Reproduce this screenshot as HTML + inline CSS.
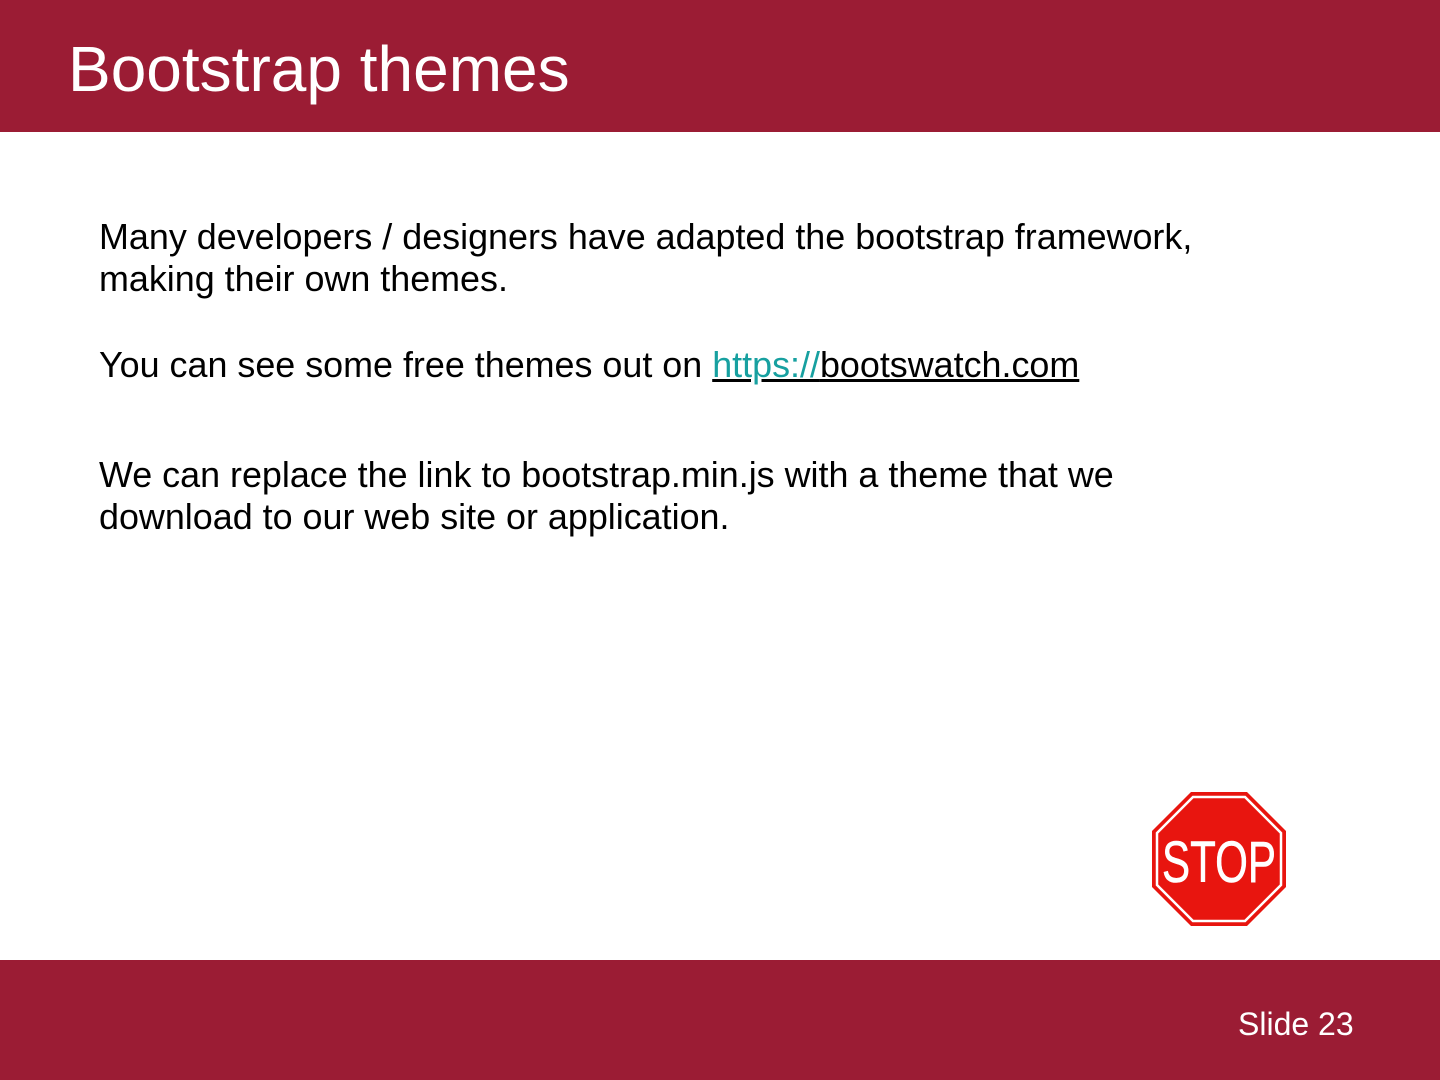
<!DOCTYPE html>
<html><head><style>
body{margin:0;width:1440px;height:1080px;position:relative;background:#fff;font-family:"Liberation Sans",sans-serif;overflow:hidden}
.hd{position:absolute;left:0;top:0;width:1440px;height:132px;background:#9b1c34}
.hd h1{position:absolute;left:68px;top:34px;margin:0;font-weight:normal;font-size:64px;line-height:70px;color:#fff}
.ft{position:absolute;left:0;top:960px;width:1440px;height:120px;background:#9b1c34}
.ft span{position:absolute;left:1238px;top:46px;font-size:32px;color:#fff}
.t{position:absolute;left:99px;font-size:35.9px;line-height:42px;color:#000;white-space:nowrap}
a{color:#000;text-decoration:underline}
.l{color:#17a0a0}
</style></head><body>
<div class="hd"><h1>Bootstrap themes</h1></div>
<div class="t" style="top:216px">Many developers / designers have adapted the bootstrap framework,<br>making their own themes.</div>
<div class="t" style="top:344px">You can see some free themes out on <a><span class="l">https://</span>bootswatch.com</a></div>
<div class="t" style="top:454px">We can replace the link to bootstrap.min.js with a theme that we<br>download to our web site or application.</div>
<svg style="position:absolute;left:1150px;top:790px" width="138" height="138" viewBox="0 0 138 138">
<polygon points="41,2 97,2 136,41 136,97 97,136 41,136 2,97 2,41" fill="#e8150f"/>
<polygon points="43,7 95,7 131,43 131,95 95,131 43,131 7,95 7,43" fill="none" stroke="#fff" stroke-width="2.5"/>
<text x="69" y="92" text-anchor="middle" font-family="Liberation Sans,sans-serif" font-size="58" fill="#fff" stroke="#fff" stroke-width="0.6" textLength="114" lengthAdjust="spacingAndGlyphs">STOP</text>
</svg>
<div class="ft"><span>Slide 23</span></div>
</body></html>
